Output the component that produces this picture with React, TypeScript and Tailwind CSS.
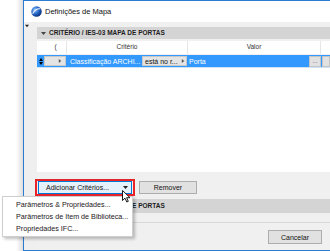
import React from "react";

const Tri = ({ dir = "down", size = 5, color = "#333" }: { dir?: "down" | "right"; size?: number; color?: string }) => (
  <svg width={size} height={size} viewBox="0 0 10 10" className="block shrink-0">
    {dir === "down" ? (
      <polygon points="0,2 10,2 5,8" fill={color} />
    ) : (
      <polygon points="2,0 8,5 2,10" fill={color} />
    )}
  </svg>
);

const SectionBar = () => (
  <div className="h-[12px] bg-[#d4d4d4] flex items-center pl-[4px] gap-[3px] shrink-0">
    <Tri size={5} color="#444" />
    <span className="text-[6.5px] font-bold text-[#1e1e1e] leading-none tracking-[0px]">CRITÉRIO / IES-03 MAPA DE PORTAS</span>
  </div>
);

export default function App() {
  return (
    <div className="relative w-[330px] h-[251px] bg-white overflow-hidden flex font-['Liberation_Sans',Arial,sans-serif]">
      {/* desktop / shadow */}
      <div className="w-[23px] shrink-0 bg-gradient-to-r from-white from-70% to-[#dedede]" />
      {/* window */}
      <div className="flex-1 flex flex-col border-l border-t border-b border-[#2b7bd0] bg-[#f0f0f0] min-w-0">
        {/* title bar */}
        <div className="h-[21px] bg-white flex items-center pl-[7px] gap-[3px] shrink-0">
          <svg width="11" height="11" viewBox="0 0 20 20" className="block">
            <defs>
              <radialGradient id="g" cx="35%" cy="35%" r="70%">
                <stop offset="0%" stopColor="#8fc3ff" />
                <stop offset="60%" stopColor="#1d5fc0" />
                <stop offset="100%" stopColor="#0b2f78" />
              </radialGradient>
            </defs>
            <circle cx="10" cy="10" r="9.5" fill="url(#g)" />
            <path d="M3 14 Q8 4 17 5" stroke="#ffffff" strokeWidth="2" fill="none" opacity="0.9" />
          </svg>
          <span className="text-[7.5px] text-[#111] leading-none">Definições de Mapa</span>
        </div>
        {/* body */}
        <div className="flex-1 flex min-h-0">
          <div className="w-[13px] shrink-0 bg-[#efefef] pt-[2px] pl-[1px]">
            <Tri size={4} color="#222" />
          </div>
          <div className="flex-1 flex flex-col min-w-0 pt-[5px]">
            <SectionBar />
            {/* table */}
            <div className="mt-[2px] h-[131px] bg-white flex flex-col shrink-0">
              <div className="h-[14px] flex text-[6.5px] text-[#333] leading-none border-b border-[#f0f0f0]">
                <div className="w-[30px] flex items-center justify-center pl-[8px] border-r border-[#e6e6e6]">(</div>
                <div className="w-[121px] flex items-center justify-center border-r border-[#e6e6e6]">Critério</div>
                <div className="w-[133px] flex items-center justify-center border-r border-[#e6e6e6]">Valor</div>
                <div className="flex-1" />
              </div>
              <div className="h-[13px] bg-[#3399ff] flex items-center text-[7px] leading-none border-b border-[#cfe3f7]">
                <div className="w-[7px] flex justify-center">
                  <svg width="4" height="7" viewBox="0 0 4 7" className="block">
                    <polygon points="2,0 4,3 0,3" fill="#000" />
                    <polygon points="0,4 4,4 2,7" fill="#000" />
                  </svg>
                </div>
                <div className="w-[22px] h-[10px] bg-[#e4e4e4] border border-[#c8c8c8] flex items-center justify-end pr-[3px]">
                  <Tri dir="right" size={4} color="#555" />
                </div>
                <div className="w-[76px] pl-[4px] text-white whitespace-nowrap">Classificação ARCHI...</div>
                <div className="w-[45px] h-[10px] bg-[#e4e4e4] border border-[#c8c8c8] flex items-center justify-between pl-[2px] pr-[1px] text-[#111] whitespace-nowrap">
                  <span>está no r...</span>
                  <Tri dir="right" size={4} color="#555" />
                </div>
                <div className="w-[122px] pl-[2px] text-white">Porta</div>
                <div className="w-[12px] h-[11px] bg-[#e1e1e1] border border-[#c4c4c4] flex items-end justify-center pb-[2px] text-[#5a2b6b] text-[6px] leading-none">...</div>
                <div className="ml-[1px] flex-1 h-[11px] bg-[#e1e1e1] border border-[#c4c4c4]" />
              </div>
            </div>
            {/* buttons */}
            <div className="h-[27px] flex items-start pt-[7px] shrink-0">
              <div className="ml-[-2px] w-[100px] h-[17px] border-2 border-[#e8242b] px-[1px] flex">
                <div className="flex-1 h-[13px] bg-[#e5f1fb] border border-[#0078d7] flex items-center text-[7px] text-[#111] leading-none">
                  <span className="pl-[7px] w-[80px] whitespace-nowrap">Adicionar Critérios...</span>
                  <div className="flex-1 flex justify-center">
                    <Tri size={5} color="#222" />
                  </div>
                </div>
              </div>
              <div className="ml-[4px] mt-[2px] w-[58px] h-[13px] bg-[#e1e1e1] border border-[#adadad] flex items-center justify-center text-[7px] text-[#111] leading-none">
                Remover
              </div>
            </div>
            <div className="h-[14px] flex flex-col shrink-0">
              <div className="h-[14px] bg-[#d4d4d4] flex items-center pl-[4px] gap-[3px]">
                <Tri size={5} color="#444" />
                <span className="text-[6.5px] font-bold text-[#1e1e1e] leading-none">CRITÉRIO / IES-03 MAPA DE PORTAS</span>
              </div>
            </div>
            <div className="h-[9px] shrink-0" />
            <div className="h-px bg-[#d9d9d9] shrink-0" />
            <div className="h-[7px] shrink-0" />
            <div className="flex shrink-0">
              <div className="ml-[231px] w-[54px] h-[14px] bg-[#e1e1e1] border border-[#adadad] flex items-center justify-center text-[7px] text-[#111] leading-none">
                Cancelar
              </div>
            </div>
          </div>
        </div>
      </div>
      {/* dropdown menu */}
      <div className="absolute left-[2px] top-[196px] w-[131px] h-[41px] bg-white border border-[#cfcfcf] shadow-[2px_2px_3px_rgba(0,0,0,0.25)] flex flex-col justify-center gap-[5px] pl-[13px] text-[7.2px] text-[#1c1622] leading-none">
        <div>Parâmetros &amp; Propriedades...</div>
        <div>Parâmetros de Item de Biblioteca...</div>
        <div>Propriedades IFC...</div>
      </div>
      {/* cursor */}
      <svg width="9" height="13" viewBox="0 0 9 13" className="absolute left-[122px] top-[190px]">
        <path d="M0.5 0.5 L0.5 10.5 L3 8.2 L4.8 12 L6.3 11.3 L4.6 7.7 L8 7.7 Z" fill="#fff" stroke="#000" strokeWidth="0.9" strokeLinejoin="round" />
      </svg>
    </div>
  );
}
